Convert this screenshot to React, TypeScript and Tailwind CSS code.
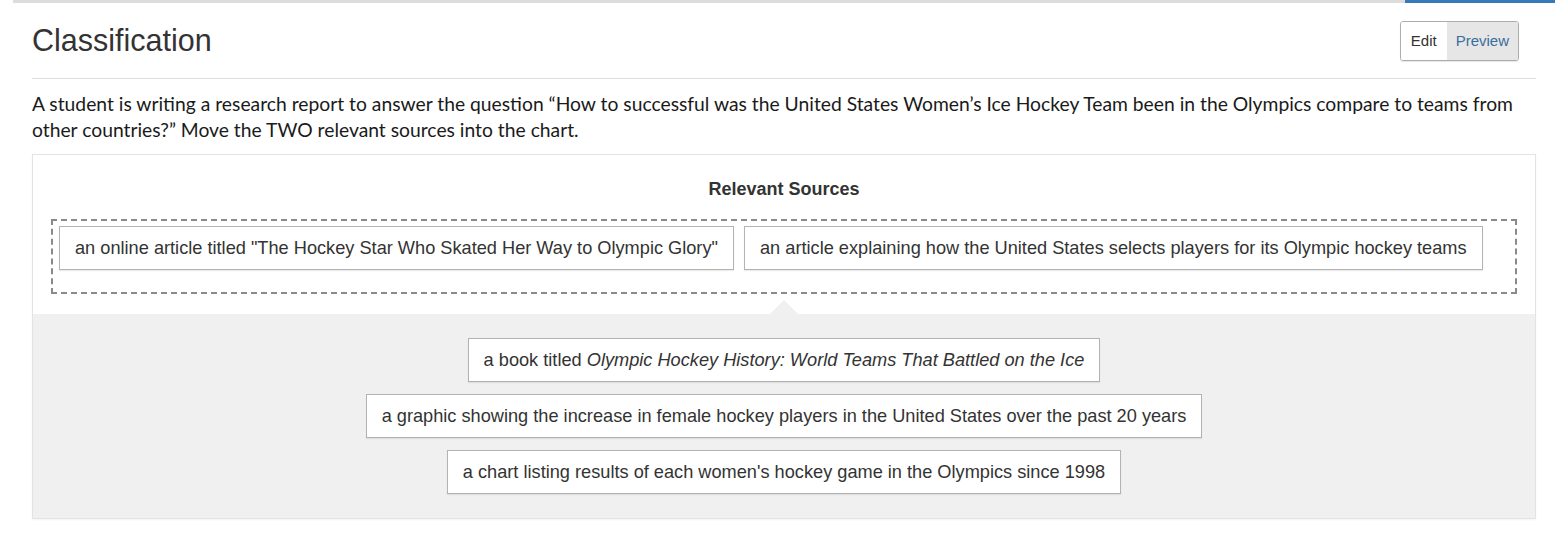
import React from "react";

const sources = [
  { id: 1, text: 'an online article titled "The Hockey Star Who Skated Her Way to Olympic Glory"' },
  { id: 2, text: "an article explaining how the United States selects players for its Olympic hockey teams" },
];

function Item({ children }: { children: React.ReactNode }) {
  return (
    <div className="border border-[#b3b3b3] bg-white px-[15px] py-[10px] text-[18.2px] leading-[22px] text-[#333] shadow-[0_1px_1px_rgba(0,0,0,0.08)]">
      {children}
    </div>
  );
}

export default function App() {
  return (
    <div className="min-h-[536px] bg-white font-['Liberation_Sans',Arial,sans-serif] text-[#333]">
      <div className="flex h-[3px] px-[13px]">
        <div className="flex-1 bg-[#dcdcdc]" />
        <div className="w-[150px] bg-[#337ab7]" />
      </div>

      <div className="mx-[32px] flex h-[76px] items-center justify-between border-b border-[#dddddd] pr-[17px]">
        <h1 className="text-[30.5px] leading-none font-normal text-[#333]">Classification</h1>
        <div className="flex overflow-hidden rounded-[3px] border border-[#adadad] text-[15px] leading-[20px] shadow-[0_1px_1px_rgba(0,0,0,0.1)]">
          <button className="bg-white px-[10px] py-[9px] text-[#333]">Edit</button>
          <button className="bg-[#e6e6e6] px-[9px] py-[9px] text-[#3a6d9e]">Preview</button>
        </div>
      </div>

      <p className="mx-[32px] mt-[12px] font-['Lato','Noto_Sans',sans-serif] text-[19.3px] leading-[26px] text-[#1a1a1a]">
        A student is writing a research report to answer the question “How to successful was the United States Women’s Ice Hockey Team been in the Olympics compare to teams from other countries?” Move the TWO relevant sources into the chart.
      </p>

      <div className="mx-[32px] mt-[11px] border border-[#e3e3e3] shadow-[0_1px_2px_rgba(0,0,0,0.05)]">
        <div className="px-[18px] pt-[23px] pb-[20px]">
          <div className="text-center text-[18px] leading-[22px] font-bold text-[#333]">Relevant Sources</div>
          <div className="mt-[19px] flex min-h-[75px] flex-wrap gap-[10px] border-2 border-dashed border-[#8a8a8a] px-[6px] pt-[5px] pb-[22px]">
            {sources.map((s) => (
              <Item key={s.id}>{s.text}</Item>
            ))}
          </div>
        </div>
        <div className="relative flex flex-col items-center gap-[12px] bg-[#f0f0f0] pt-[24px] pb-[24px]">
          <div className="absolute -top-[14px] left-1/2 h-0 w-0 -translate-x-1/2 border-x-[14px] border-b-[14px] border-x-transparent border-b-[#f0f0f0]" />
          <Item>
            a book titled <i>Olympic Hockey History: World Teams That Battled on the Ice</i>
          </Item>
          <Item>a graphic showing the increase in female hockey players in the United States over the past 20 years</Item>
          <Item>a chart listing results of each women's hockey game in the Olympics since 1998</Item>
        </div>
      </div>
    </div>
  );
}
